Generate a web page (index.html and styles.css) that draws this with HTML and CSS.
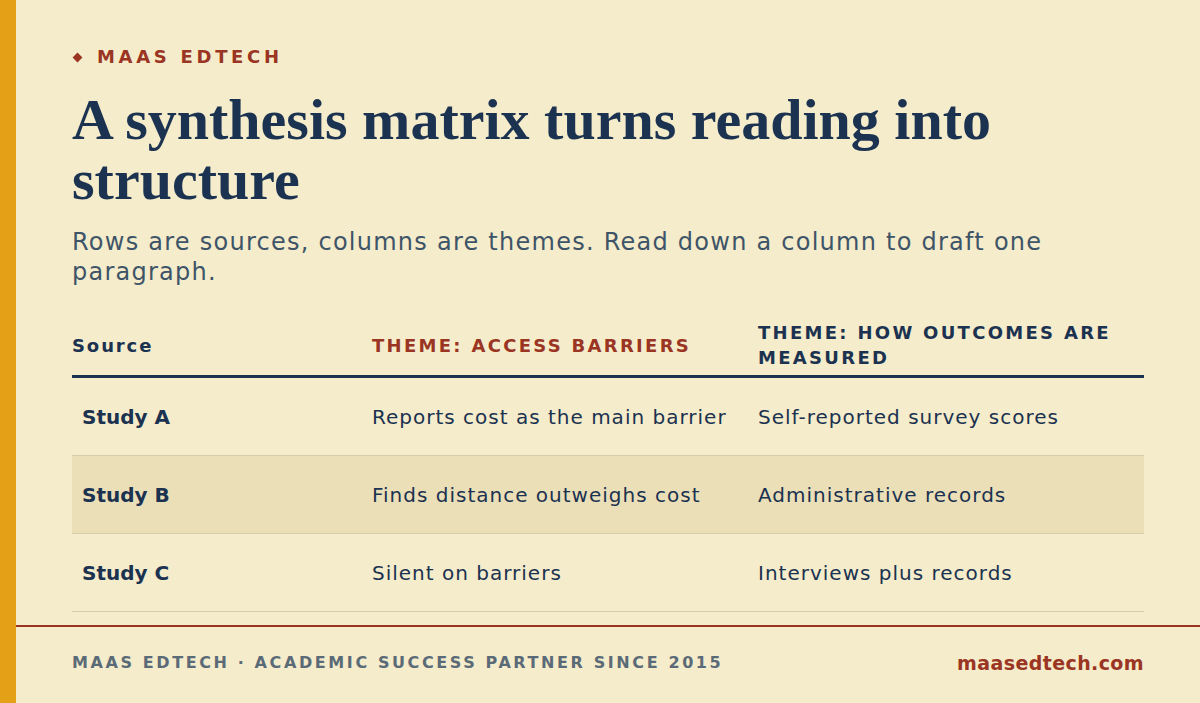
FILE: index.html
```html
<!DOCTYPE html>
<html lang="en">
<head>
<meta charset="utf-8">
<title>Synthesis matrix</title>
<link rel="stylesheet" href="styles.css">
</head>
<body>
<div class="page">
  <div class="accent"></div>
  <div class="main">
    <div class="content">
      <div class="eyebrow"><span class="diamond"></span><span>MAAS EDTECH</span></div>
      <h1 class="title">A synthesis matrix turns reading into structure</h1>
      <p class="lede">Rows are sources, columns are themes. Read down a column to draft one paragraph.</p>
      <table class="matrix">
        <colgroup>
          <col class="c1"><col class="c2"><col class="c3">
        </colgroup>
        <thead>
          <tr>
            <th class="h-source">Source</th>
            <th class="h-theme accent-red">THEME: ACCESS BARRIERS</th>
            <th class="h-theme">THEME: HOW OUTCOMES ARE MEASURED</th>
          </tr>
        </thead>
        <tbody>
          <tr>
            <td class="label">Study A</td>
            <td>Reports cost as the main barrier</td>
            <td>Self-reported survey scores</td>
          </tr>
          <tr class="shaded">
            <td class="label">Study B</td>
            <td>Finds distance outweighs cost</td>
            <td>Administrative records</td>
          </tr>
          <tr>
            <td class="label">Study C</td>
            <td>Silent on barriers</td>
            <td>Interviews plus records</td>
          </tr>
        </tbody>
      </table>
    </div>
    <footer class="footer">
      <span class="foot-left">MAAS EDTECH · ACADEMIC SUCCESS PARTNER SINCE 2015</span>
      <span class="foot-right">maasedtech.com</span>
    </footer>
  </div>
</div>
</body>
</html>
```

FILE: styles.css
```css
* { box-sizing: border-box; }
html, body { margin: 0; padding: 0; }
body {
  background: #F5ECCB;
  font-family: "DejaVu Sans", Inter, sans-serif;
  color: #1B3250;
}
.page {
  display: flex;
  width: 1200px;
  height: 703px;
}
.accent {
  width: 16px;
  flex: none;
  background: #E4A118;
}
.main {
  flex: 1;
  display: flex;
  flex-direction: column;
}
.content {
  padding: 46px 56px 0 56px;
  flex: 1;
}
.eyebrow {
  display: flex;
  align-items: center;
  gap: 16px;
  color: #9B3523;
  font-weight: 700;
  font-size: 18px;
  letter-spacing: 3.7px;
  line-height: 22px;
}
.diamond {
  width: 7px;
  height: 7px;
  background: #9B3523;
  transform: rotate(45deg);
  margin-left: 2px;
}
.title {
  margin: 22px 0 0 0;
  font-family: "Liberation Serif", "DejaVu Serif", serif;
  font-weight: 700;
  font-size: 58px;
  line-height: 60px;
  color: #1B3250;
}
.lede {
  margin: 17px 0 0 0;
  font-size: 24px;
  line-height: 30px;
  letter-spacing: 1.25px;
  color: #3E5468;
  max-width: 1010px;
}
.matrix {
  width: 100%;
  margin-top: 23px;
  border-collapse: collapse;
  table-layout: fixed;
}
.c1 { width: 300px; }
.c2 { width: 386px; }
.c3 { width: 386px; }
.matrix th {
  text-align: left;
  vertical-align: middle;
  font-size: 18px;
  font-weight: 700;
  letter-spacing: 2.3px;
  line-height: 25px;
  padding: 10px 20px 5px 0;
  border-bottom: 3px solid #1B3250;
  color: #1B3250;
}
.matrix th.h-source { letter-spacing: 1.9px; }
.matrix th.accent-red { color: #9B3523; }
.matrix td {
  height: 78px;
  padding: 0 10px 0 0;
  font-size: 20px;
  letter-spacing: 1px;
  color: #1B3250;
  border-bottom: 1px solid #D8CDAA;
  vertical-align: middle;
}
.matrix tbody tr:first-child td { height: 79px; }
.matrix td.label {
  padding-left: 10px;
  font-weight: 700;
  letter-spacing: 0;
}
.matrix tr.shaded td { background: #EBDFB8; }
.footer {
  height: 78px;
  border-top: 2px solid #9B3523;
  padding: 0 56px 5px 56px;
  display: flex;
  align-items: center;
  justify-content: space-between;
}
.foot-left {
  font-size: 16px;
  font-weight: 700;
  letter-spacing: 2.6px;
  color: #5B6A77;
}
.foot-right {
  font-size: 19px;
  font-weight: 700;
  letter-spacing: 0.4px;
  color: #9B3523;
}
```
